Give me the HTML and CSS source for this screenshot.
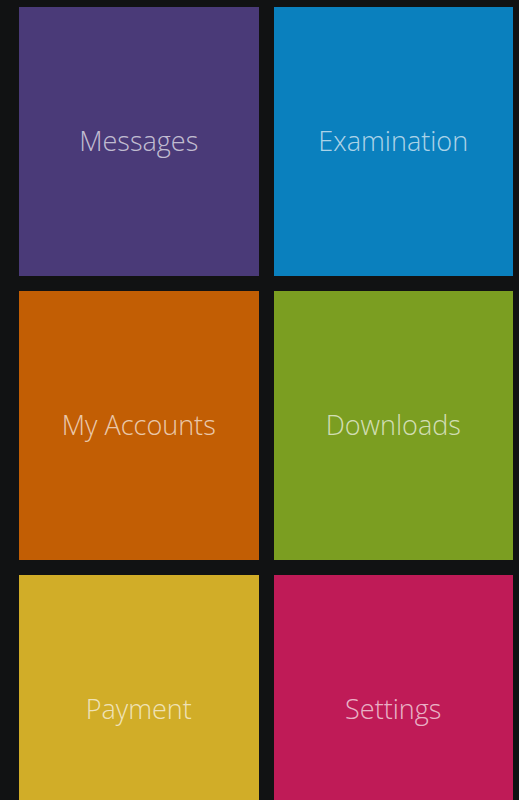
FILE: index.html
```html
<!DOCTYPE html>
<html lang="en">
<head>
  <meta charset="UTF-8" />
  <title>Dashboard</title>
  <link rel="stylesheet" href="styles.css">
</head>
<body>

  <div class="painel">
    <div class="tile roxo">Messages</div>
    <div class="tile azul">Examination</div>
    <div class="tile laranja">My Accounts</div>
    <div class="tile verde">Downloads</div>
    <div class="tile amarelo">Payment</div>
    <div class="tile rosa">Settings</div>
  </div>

</body>
</html>
```

FILE: styles.css
```css
body {
  font-family: 'Open Sans', 'Noto Sans', sans-serif;
  background: #111213;
  margin: 0;
  padding: 7px 6px 0 19px;
  overflow: hidden;
}

.painel {
  display: grid;
  grid-template-columns: 1fr 1fr;
  grid-auto-rows: 269px;
  gap: 15px;
}

.tile {
  display: flex;
  align-items: center;
  justify-content: center;
  padding-bottom: 2px;
  color: rgba(255, 255, 255, 0.68);
  font-size: 27px;
  font-weight: 300;
}

.roxo { background: #4a3a78; }
.azul { background: #0a80be; }
.laranja { background: #c25e04; }
.verde { background: #7b9e21; }
.amarelo { background: #d1ad28; }
.rosa { background: #bf1b57; }
```
